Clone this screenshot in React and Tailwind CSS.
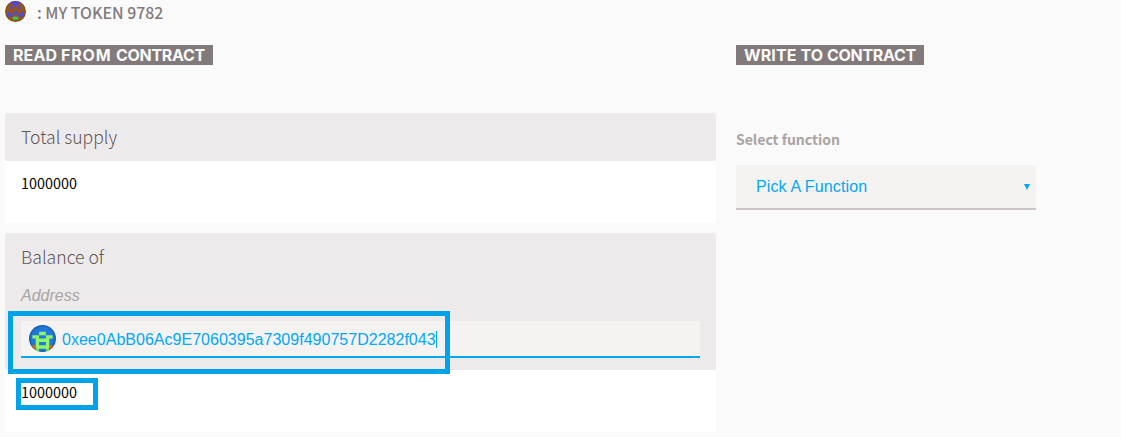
const CJK = "font-['Noto_Sans_CJK_SC',sans-serif]";

function TokenIcon() {
  return (
    <svg className="block h-[21px] w-[21px] shrink-0" viewBox="0 0 8 8">
      <defs>
        <clipPath id="token-clip"><circle cx="4" cy="4" r="4" /></clipPath>
        <radialGradient id="token-shade"><stop offset=".8" stopColor="#000" stopOpacity="0" /><stop offset="1" stopColor="#000" stopOpacity=".18" /></radialGradient>
      </defs>
      <g clipPath="url(#token-clip)">
        <path fill="#985814" d="M0 0h8v8H0z" />
        <path fill="#5247e0" d="M2 0h4v1H2zM3 1h2v1H3zM2 2h1v1H2zM5 2h1v1H5zM1 4h1v1H1zM3 4h2v1H3zM6 4h1v1H6zM1 5h2v1H1zM5 5h2v1H5z" />
        <path fill="#1fdc4b" d="M3 6h2v1H3z" />
        <circle cx="4" cy="4" r="4" fill="url(#token-shade)" />
      </g>
    </svg>
  );
}

function AddressIcon() {
  return (
    <svg className="block h-[27px] w-[27px] shrink-0" viewBox="0 0 8 8">
      <defs>
        <clipPath id="address-clip"><circle cx="4" cy="4" r="4" /></clipPath>
        <radialGradient id="address-shade"><stop offset=".8" stopColor="#000" stopOpacity="0" /><stop offset="1" stopColor="#000" stopOpacity=".25" /></radialGradient>
      </defs>
      <g clipPath="url(#address-clip)">
        <path fill="#1f78db" d="M0 0h8v8H0z" />
        <path fill="#90f56a" d="M3 2h2v1H3zM1 3h2v1H1zM5 3h2v1H5zM2 4h4v1H2zM2 5h1v3H2zM5 5h1v3H5zM3 6h2v1H3z" />
        <path fill="#d8752b" d="M0 6h2v1H0zM6 6h2v1H6z" />
        <circle cx="4" cy="4" r="4" fill="url(#address-shade)" />
      </g>
    </svg>
  );
}

function SectionTitle({ children, className }) {
  return (
    <h2 className={`h-5 whitespace-nowrap bg-[#827a7a] pl-2 font-['Inter',sans-serif] text-[16px] font-bold leading-5 text-[#fafafa] ${className}`}>
      {children}
    </h2>
  );
}

function Value({ children }) {
  return <span className={`${CJK} block text-[14.4px] leading-5 text-black`}>{children}</span>;
}

export default function App() {
  return (
    <div className="h-[437px] overflow-hidden bg-[#fafafa] font-['Noto_Sans_CJK_SC',sans-serif]">
      <header className="flex h-[45px] items-start pl-[5px] pt-px">
        <TokenIcon />
        <span className="ml-[11px] mt-0.5 whitespace-nowrap text-[15.85px] font-medium leading-5 text-[#827a7a]">: MY TOKEN 9782</span>
      </header>
      <main className="flex gap-5 pl-[5px]">
        <section className="w-[711px]">
          <SectionTitle className="w-[208px]">
            <span className="tracking-[0.1px]">READ </span><span className="tracking-[0.8px]">FROM </span><span className="tracking-[-0.3px]">CONTRACT</span>
          </SectionTitle>
          <div className="mt-12 h-[110px] bg-white">
            <div className="h-12 rounded-[2px] bg-[#eceaeb] px-4 pt-3">
              <h3 className="text-[17.6px] font-light leading-6 text-[#5f5656]">Total supply</h3>
            </div>
            <div className="px-4 pt-3"><Value>1000000</Value></div>
          </div>
          <div className="mt-2.5 h-[199px] bg-white">
            <div className="h-[137px] rounded-[2px] bg-[#eceaeb] px-4 pt-3">
              <h3 className="text-[17.6px] font-light leading-6 text-[#5f5656]">Balance of</h3>
              <p className="mt-[17px] font-['Liberation_Sans',sans-serif] text-[16px] italic leading-5 text-[#aaa4a4]">Address</p>
              <div className="relative mt-[15px] flex h-[37px] items-center border-b-2 border-[#02a8f3] bg-[#f4f3f2] pl-2">
                <AddressIcon />
                <span className="ml-1.5 pt-0.5 font-['Liberation_Sans',sans-serif] text-[16px] leading-5 tracking-[0.02px] text-[#02a8f3]">0xee0AbB06Ac9E7060395a7309f490757D2282f043</span>
                <span className="mt-px h-[17px] w-px bg-[#02a8f3]" />
                <div className="absolute -left-[13px] -top-[10px] h-[63px] w-[442px] border-5 border-[#00a2e8]" />
              </div>
            </div>
            <div className="relative px-4 pt-3">
              <Value>1000000</Value>
              <div className="absolute left-[11px] top-2 h-8 w-[82px] border-5 border-[#00a2e8]" />
            </div>
          </div>
        </section>
        <section className="w-[300px]">
          <SectionTitle className="w-[188px]">
            <span className="tracking-[0.1px]">WRITE TO </span><span className="tracking-[-0.3px]">CONTRACT</span>
          </SectionTitle>
          <p className="mt-16 text-[14px] font-bold leading-5 text-[#aaa4a4]">Select function</p>
          <div className="mt-4 flex h-[45px] items-center justify-between border-b-2 border-[#ccc5c6] bg-[#f4f3f2] pl-5 pr-1.5 text-[#02a8f3]">
            <span className="font-['Liberation_Sans',sans-serif] text-[16px] leading-5 tracking-[0.12px]">Pick A Function</span>
            <svg className="h-1.5 w-1.5" viewBox="0 0 6 6" fill="currentColor"><path d="M0 0h6L3 6z" /></svg>
          </div>
        </section>
      </main>
    </div>
  );
}
